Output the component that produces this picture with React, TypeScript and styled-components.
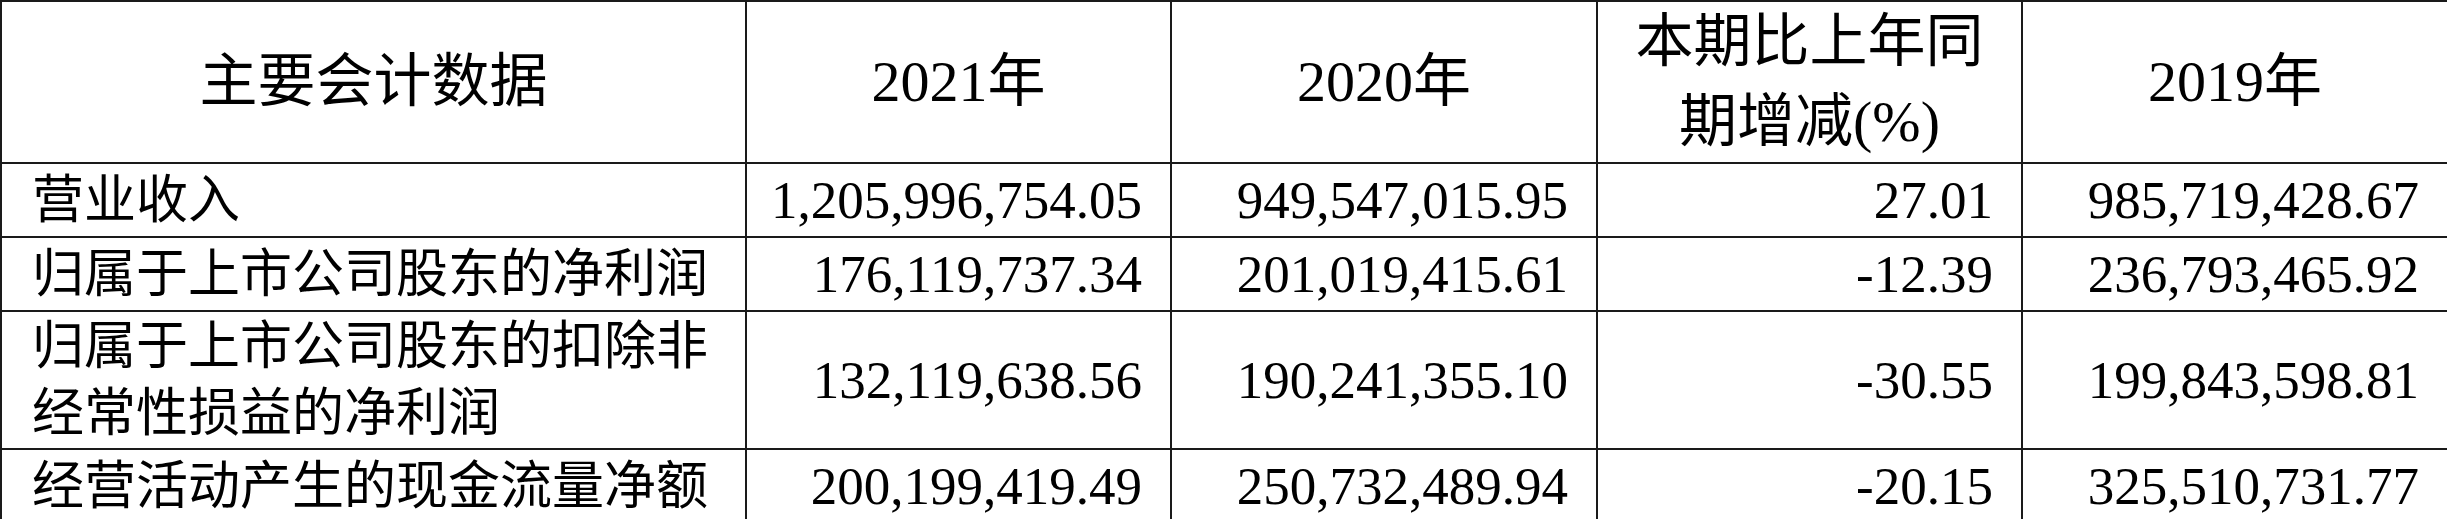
import styled, { createGlobalStyle } from 'styled-components';

const GlobalStyle = createGlobalStyle`
  html, body {
    margin: 0;
    padding: 0;
    background: #fff;
  }
`;

const Table = styled.table`
  width: 2447px;
  table-layout: fixed;
  border-collapse: collapse;
  font-family: "Liberation Serif", "Noto Sans CJK SC", serif;
  color: #000;
`;

const Row = styled.tr<{ $h: number }>`
  height: ${(p) => p.$h}px;
`;

const HeadCell = styled.th`
  border: 2px solid #1a1a1a;
  font-weight: normal;
  font-size: 58px;
  line-height: 80px;
  text-align: center;
  vertical-align: middle;
  padding: 0;
`;

const LabelCell = styled.td`
  border: 2px solid #1a1a1a;
  font-size: 52px;
  line-height: 67px;
  text-align: left;
  vertical-align: middle;
  padding: 0 0 0 30px;
  white-space: nowrap;
`;

const NumCell = styled.td`
  border: 2px solid #1a1a1a;
  font-size: 53px;
  text-align: right;
  vertical-align: middle;
  padding: 0 28px 0 0;
  white-space: nowrap;
`;

type Line = {
  label: string[];
  h: number;
  values: [string, string, string, string];
};

const rows: Line[] = [
  { label: ['营业收入'], h: 74, values: ['1,205,996,754.05', '949,547,015.95', '27.01', '985,719,428.67'] },
  { label: ['归属于上市公司股东的净利润'], h: 74, values: ['176,119,737.34', '201,019,415.61', '-12.39', '236,793,465.92'] },
  {
    label: ['归属于上市公司股东的扣除非', '经常性损益的净利润'],
    h: 138,
    values: ['132,119,638.56', '190,241,355.10', '-30.55', '199,843,598.81'],
  },
  { label: ['经营活动产生的现金流量净额'], h: 74, values: ['200,199,419.49', '250,732,489.94', '-20.15', '325,510,731.77'] },
];

export default function App() {
  return (
    <>
      <GlobalStyle />
      <Table>
        <colgroup>
          <col style={{ width: 745 }} />
          <col style={{ width: 425 }} />
          <col style={{ width: 426 }} />
          <col style={{ width: 425 }} />
          <col style={{ width: 426 }} />
        </colgroup>
        <thead>
          <Row $h={158}>
            <HeadCell>主要会计数据</HeadCell>
            <HeadCell>2021年</HeadCell>
            <HeadCell>2020年</HeadCell>
            <HeadCell>
              本期比上年同
              <br />
              期增减(%)
            </HeadCell>
            <HeadCell>2019年</HeadCell>
          </Row>
        </thead>
        <tbody>
          {rows.map((r) => (
            <Row key={r.label.join('')} $h={r.h}>
              <LabelCell>
                {r.label.map((l, i) => (
                  <span key={l}>
                    {i > 0 && <br />}
                    {l}
                  </span>
                ))}
              </LabelCell>
              {r.values.map((v, i) => (
                <NumCell key={i}>{v}</NumCell>
              ))}
            </Row>
          ))}
        </tbody>
      </Table>
    </>
  );
}
